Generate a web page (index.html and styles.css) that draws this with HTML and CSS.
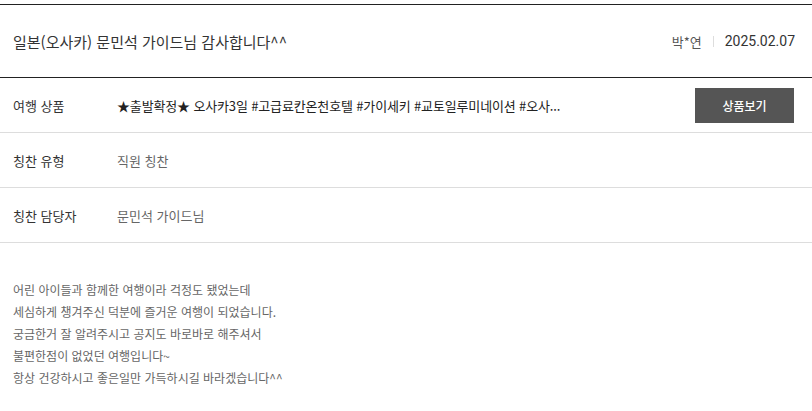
FILE: index.html
```html
<!DOCTYPE html>
<html lang="ko">
<head>
    <meta charset="UTF-8">
    <meta name="viewport" content="width=device-width, initial-scale=1.0">
    <title>칭찬합시다</title>
    <link rel="stylesheet" href="styles.css">
</head>
<body>
    <div class="board-view">
        <div class="view-head">
            <h2 class="view-title">일본(오사카) 문민석 가이드님 감사합니다^^</h2>
            <div class="view-meta">
                <span class="writer">박*연</span>
                <span class="bar"></span>
                <span class="date">2025.02.07</span>
            </div>
        </div>
        <dl class="view-row">
            <dt>여행 상품</dt>
            <dd class="product">
                <span class="product-name">★출발확정★ 오사카3일 #고급료칸온천호텔 #가이세키 #교토일루미네이션 #오사...</span>
                <a href="#" class="btn-goods">상품보기</a>
            </dd>
        </dl>
        <dl class="view-row">
            <dt>칭찬 유형</dt>
            <dd class="muted">직원 칭찬</dd>
        </dl>
        <dl class="view-row">
            <dt>칭찬 담당자</dt>
            <dd class="muted">문민석 가이드님</dd>
        </dl>
        <div class="view-content">
            <p>어린 아이들과 함께한 여행이라 걱정도 됐었는데</p>
            <p>세심하게 챙겨주신 덕분에 즐거운 여행이 되었습니다.</p>
            <p>궁금한거 잘 알려주시고 공지도 바로바로 해주셔서</p>
            <p>불편한점이 없었던 여행입니다~</p>
            <p>항상 건강하시고 좋은일만 가득하시길 바라겠습니다^^</p>
        </div>
    </div>
</body>
</html>
```

FILE: styles.css
```css
body {
    margin: 0;
    padding: 4px 0 0;
    background: #fff;
    font-family: 'Noto Sans CJK KR', 'Noto Sans', sans-serif;
    color: #333;
}

.board-view {
    border-top: 1px solid #222;
}

.view-head {
    display: flex;
    align-items: center;
    justify-content: space-between;
    height: 72px;
    padding: 0 17px 0 13px;
    border-bottom: 1px solid #222;
}

.view-title {
    margin: 0;
    font-size: 15px;
    font-weight: 400;
    color: #333;
}

.view-meta {
    display: flex;
    align-items: center;
    font-size: 13px;
}

.writer {
    color: #555;
}

.bar {
    width: 1px;
    height: 11px;
    margin: 0 11px;
    background: #ddd;
}

.date {
    font-family: Roboto, 'Liberation Sans', sans-serif;
    font-size: 14px;
    color: #333;
}

.view-row {
    display: flex;
    align-items: center;
    height: 54px;
    margin: 0;
    padding: 0 18px 0 13px;
    border-bottom: 1px solid #ddd;
    font-size: 13px;
}

.view-row dt {
    width: 104px;
    flex-shrink: 0;
    color: #333;
}

.view-row dd {
    flex: 1;
    margin: 0;
    min-width: 0;
}

.product {
    display: flex;
    align-items: center;
    justify-content: space-between;
}

.product-name {
    letter-spacing: -0.15px;
    white-space: nowrap;
    color: #222;
}

.btn-goods {
    display: flex;
    align-items: center;
    justify-content: center;
    width: 99px;
    height: 35px;
    background: #555;
    color: #fff;
    font-size: 12px;
    font-weight: 500;
    text-decoration: none;
}

.muted {
    color: #666;
}

.view-content {
    padding: 36px 13px 20px;
    font-size: 12px;
    color: #666;
}

.view-content p {
    margin: 0;
    line-height: 22px;
}
```
